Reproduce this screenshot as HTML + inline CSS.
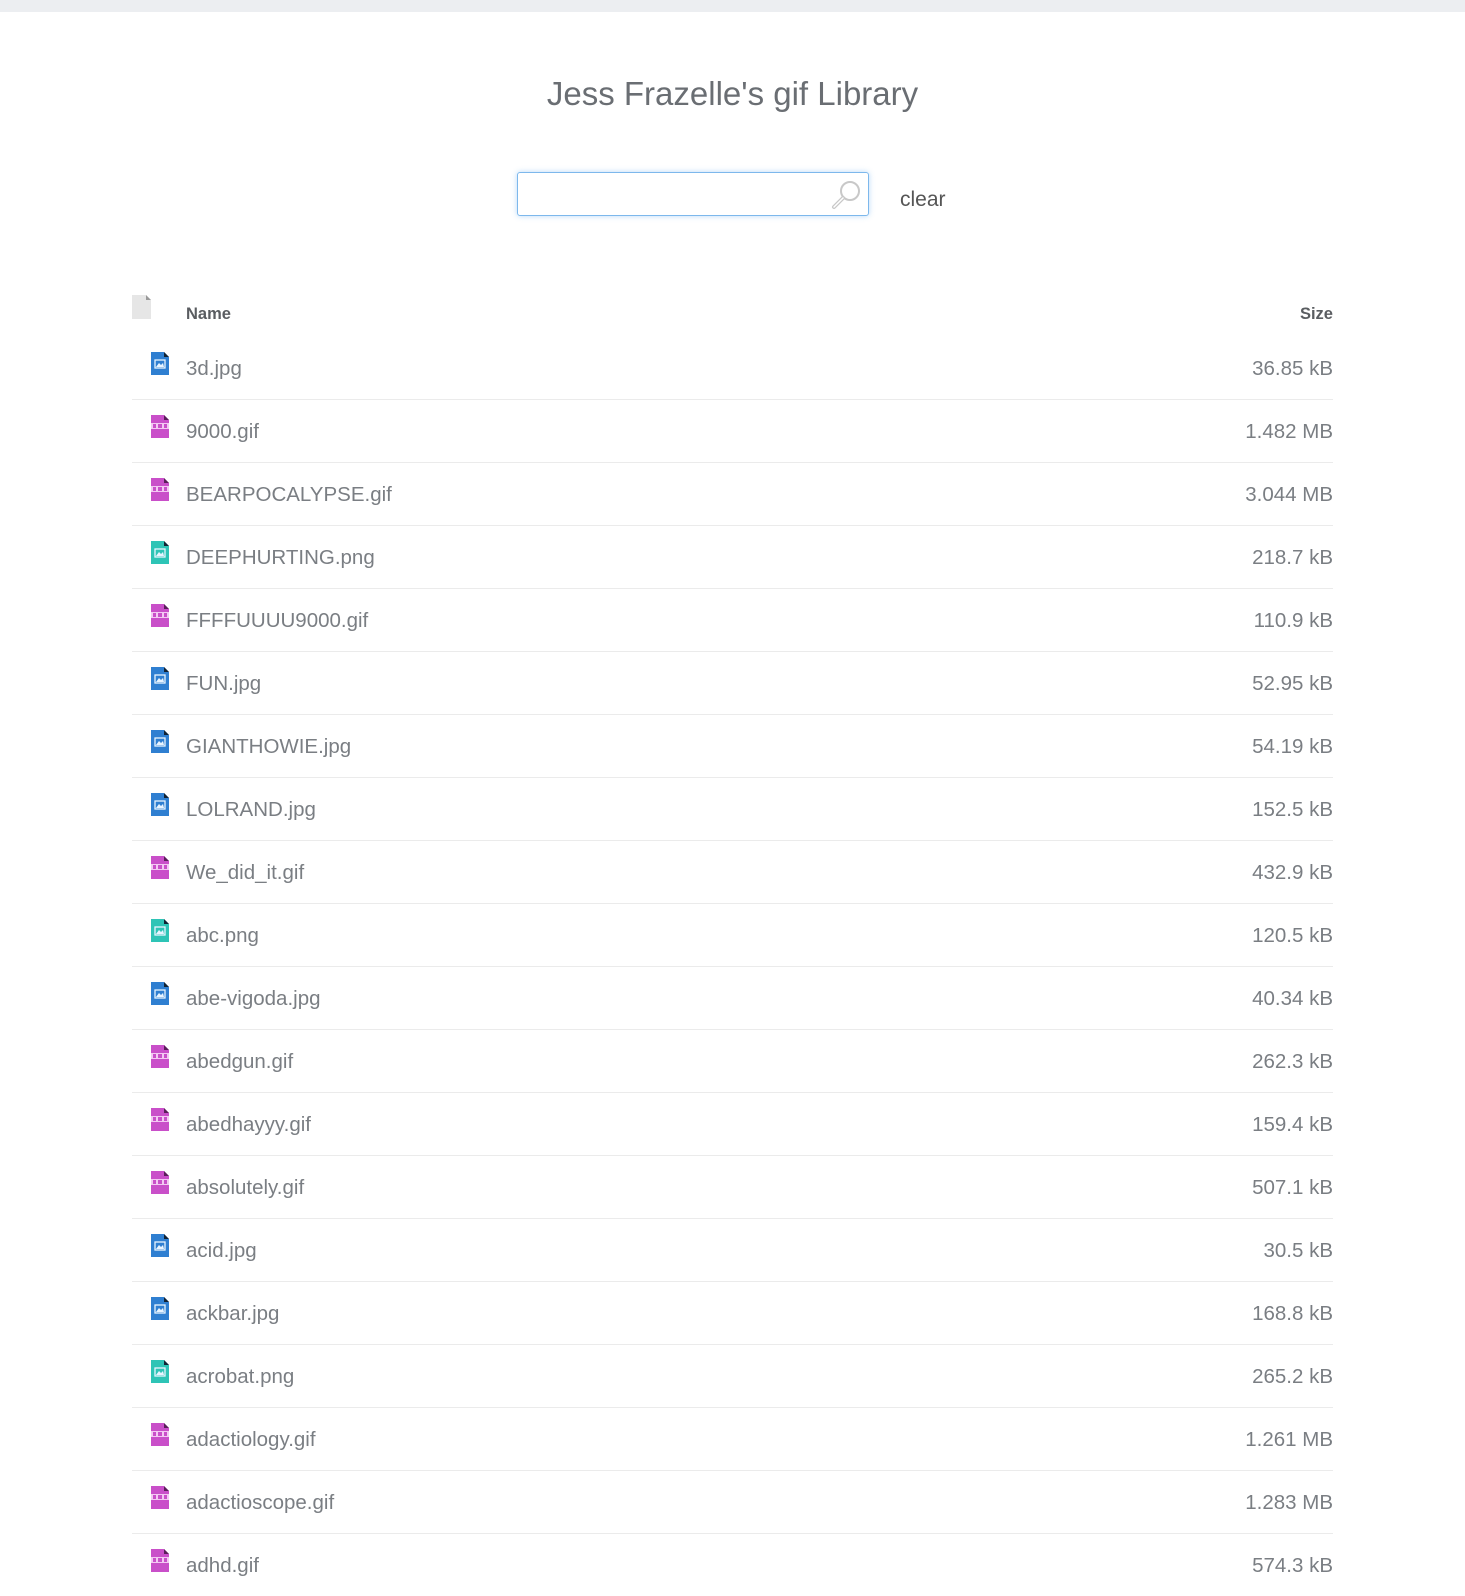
<!DOCTYPE html>
<html><head><meta charset="utf-8"><style>
body{margin:0;background:#fff;font-family:"Liberation Sans",sans-serif;width:1465px;height:1596px;position:relative;overflow:hidden}
.bar{position:absolute;left:0;top:0;width:1465px;height:12px;background:#eceef1}
h1{position:absolute;top:70px;left:0;width:1465px;text-align:center;margin:0;font-weight:normal;font-size:33px;color:#6a6e73;line-height:48px}
.inp{position:absolute;left:517px;top:172px;width:350px;height:42px;border:1px solid #7db8ec;border-radius:3px;box-shadow:0 0 6px rgba(100,170,240,.45)}
.clear{position:absolute;left:900px;top:188px;font-size:21px;color:#555}
.hd{position:absolute;top:305px;font-weight:bold;font-size:16.5px;color:#5a5d61}
.row{position:absolute;left:132px;width:1201px;height:63px}
.sep{position:absolute;left:0;top:0;width:1201px;height:1px;background:#ebebeb}
.ic{position:absolute;left:19px;top:16px}
.nm{position:absolute;left:54px;top:21px;font-size:20.5px;color:#7a7e83}
.sz{position:absolute;right:0;top:21px;font-size:20.5px;color:#7a7e83}
</style></head><body>
<div class="bar"></div>
<h1>Jess Frazelle's gif Library</h1>
<div class="inp"><svg style="position:absolute;right:4px;top:5px" width="34" height="32" viewBox="0 0 34 32"><circle cx="20" cy="13" r="9" fill="none" stroke="#c8c8c8" stroke-width="2"/><path d="M13 20 L4 29" stroke="#c8c8c8" stroke-width="4" stroke-linecap="round"/><path d="M13 20 L4 29" stroke="#fff" stroke-width="1.5" stroke-linecap="round"/></svg></div>
<div class="clear">clear</div>
<svg style="position:absolute;left:132px;top:295px" width="19" height="24"><path d="M0 0H14L19 5V24H0Z" fill="#e6e6e6"/><path d="M14 0L19 5H14Z" fill="#999"/></svg>
<div class="hd" style="left:186px">Name</div>
<div class="hd" style="right:132px">Size</div>
<div id="rows"></div>
<script>
var d=[["3d.jpg","36.85 kB"],["9000.gif","1.482 MB"],["BEARPOCALYPSE.gif","3.044 MB"],["DEEPHURTING.png","218.7 kB"],["FFFFUUUU9000.gif","110.9 kB"],["FUN.jpg","52.95 kB"],["GIANTHOWIE.jpg","54.19 kB"],["LOLRAND.jpg","152.5 kB"],["We_did_it.gif","432.9 kB"],["abc.png","120.5 kB"],["abe-vigoda.jpg","40.34 kB"],["abedgun.gif","262.3 kB"],["abedhayyy.gif","159.4 kB"],["absolutely.gif","507.1 kB"],["acid.jpg","30.5 kB"],["ackbar.jpg","168.8 kB"],["acrobat.png","265.2 kB"],["adactiology.gif","1.261 MB"],["adactioscope.gif","1.283 MB"],["adhd.gif","574.3 kB"]];
var h="";
d.forEach(function(r,i){
var ext=r[0].split(".").pop(),c=ext=="gif"?"#c94fc9":ext=="png"?"#2ec4b6":"#2f7fd1",dk=ext=="gif"?"#5a1f5a":"#123";
var inner=ext=="gif"?'<rect x="0" y="8" width="18" height="6" fill="#f3c8f3"/><rect x="2" y="9" width="3" height="4" fill="'+c+'"/><rect x="7" y="9" width="4" height="4" fill="'+c+'"/><rect x="13" y="9" width="3" height="4" fill="'+c+'"/>':'<rect x="4" y="8" width="10" height="8" fill="none" stroke="#e8f4ff" stroke-width="1.3"/><path d="M5 15L8 11L10 13L12 11L13 15Z" fill="#e8f4ff"/>';
h+='<div class="row" style="top:'+(336+63*i)+'px">'+(i?'<div class="sep"></div>':'')+'<svg class="ic" width="18" height="23"><path d="M0 0H13L18 5V23H0Z" fill="'+c+'"/><path d="M13 0L18 5H13Z" fill="'+dk+'"/>'+inner+'</svg><div class="nm">'+r[0]+'</div><div class="sz">'+r[1]+'</div></div>';
});
document.getElementById("rows").innerHTML=h;
</script>
</body></html>
